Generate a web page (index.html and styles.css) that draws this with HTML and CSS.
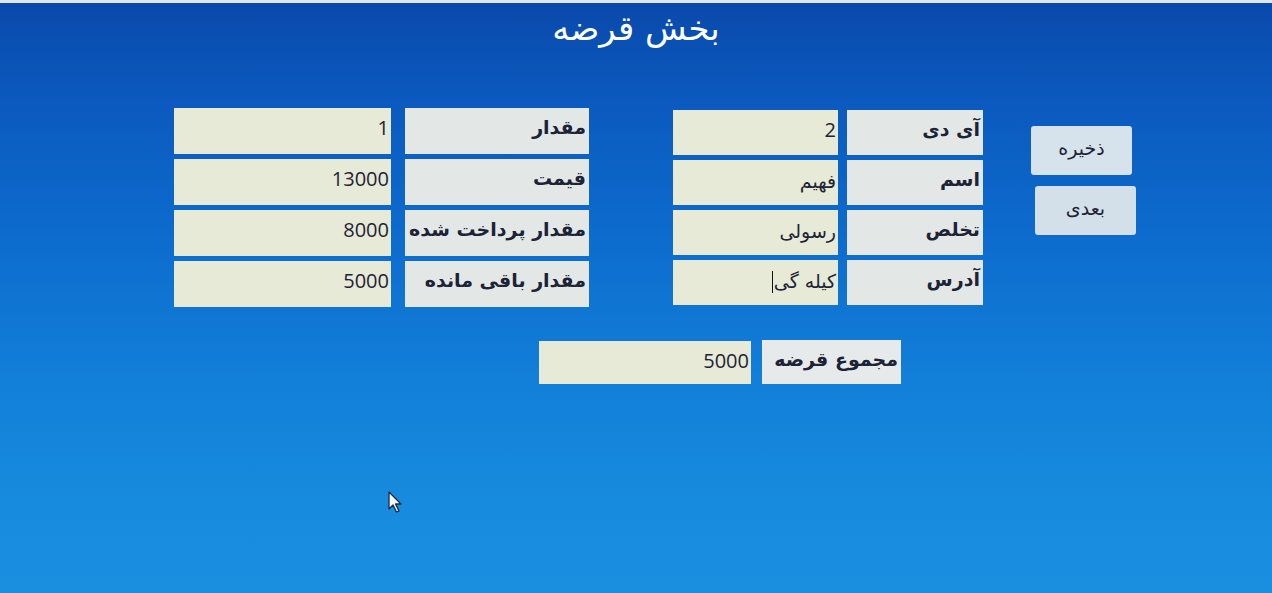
FILE: index.html
```html
<!DOCTYPE html>
<html lang="fa">
<head>
<meta charset="utf-8">
<link rel="stylesheet" href="styles.css">
</head>
<body>
<div class="screen">
  <h1 class="title" dir="rtl">بخش قرضه</h1>
  <div class="main">
    <div class="grid grid-left">
      <div class="val">1</div><div class="lbl" dir="rtl">مقدار</div>
      <div class="val">13000</div><div class="lbl" dir="rtl">قیمت</div>
      <div class="val">8000</div><div class="lbl" dir="rtl">مقدار پرداخت شده</div>
      <div class="val">5000</div><div class="lbl" dir="rtl">مقدار باقی مانده</div>
    </div>
    <div class="grid grid-right">
      <div class="val">2</div><div class="lbl" dir="rtl">آی دی</div>
      <div class="val fa" dir="rtl">فهیم</div><div class="lbl" dir="rtl">اسم</div>
      <div class="val fa" dir="rtl">رسولی</div><div class="lbl" dir="rtl">تخلص</div>
      <div class="val fa" dir="rtl">کیله گی<span class="caret"></span></div><div class="lbl" dir="rtl">آدرس</div>
    </div>
    <div class="buttons">
      <button class="btn btn-save" dir="rtl">ذخیره</button>
      <button class="btn btn-next" dir="rtl">بعدی</button>
    </div>
  </div>
  <div class="total">
    <div class="val total-val">5000</div>
    <div class="lbl total-lbl" dir="rtl">مجموع قرضه</div>
  </div>
  <svg class="cursor" width="16" height="24" viewBox="0 0 16 24">
    <path d="M1 1 L1 18 L5 14 L8.5 21 L11 20 L7.5 13 L13 13 Z" fill="#f4f6f2" stroke="#1d2a44" stroke-width="1.3" stroke-linejoin="round"/>
  </svg>
</div>
</body>
</html>
```
FILE: styles.css
```css
html, body {
  margin: 0;
  padding: 0;
}
body {
  width: 1272px;
  height: 593px;
  overflow: hidden;
  font-family: "DejaVu Sans", "Noto Sans", sans-serif;
}
.screen {
  position: relative;
  width: 1272px;
  height: 593px;
  box-sizing: border-box;
  border-top: 3px solid #dfe6ee;
  background: linear-gradient(180deg, #0a49ab 0%, #0b58bd 15%, #0d6cce 40%, #1280d9 65%, #178bde 85%, #1a8fe0 100%);
}
.title {
  margin: 0;
  padding-top: 4px;
  height: 50px;
  text-align: center;
  color: #ffffff;
  font-size: 34px;
  font-weight: normal;
  line-height: 42px;
  box-sizing: border-box;
}
.main {
  display: flex;
  align-items: flex-start;
  padding-left: 174px;
  margin-top: 55px;
}
.grid {
  display: grid;
  row-gap: 5px;
}
.grid-left {
  grid-auto-rows: 46px;
  grid-template-columns: 217px 184px;
  column-gap: 14px;
}
.grid-right {
  grid-auto-rows: 45px;
  margin-left: 84px;
  margin-top: 2px;
  grid-template-columns: 165px 136px;
  column-gap: 9px;
}
.val, .lbl {
  box-sizing: border-box;
  text-align: right;
  color: #1d2336;
  font-size: 19px;
  line-height: 24px;
}
.val {
  background: #e7ead6;
  padding: 8px 2px 0 0;
  font-family: "Open Sans", "Liberation Sans", sans-serif;
  font-size: 20px;
}
.val.fa {
  font-family: "DejaVu Sans", sans-serif;
  font-size: 19px;
  padding-top: 9px;
}
.lbl {
  background: #e3e8e7;
  padding: 7px 3px 0 0;
  font-weight: bold;
}
.caret {
  display: inline-block;
  width: 1px;
  height: 22px;
  background: #111;
  vertical-align: -5px;
  margin-right: 1px;
}
.buttons {
  display: flex;
  flex-direction: column;
  margin-left: 48px;
  margin-top: 18px;
  gap: 11px;
}
.btn {
  width: 101px;
  height: 49px;
  border: none;
  border-radius: 3px;
  background: #d7e3ec;
  color: #1d2336;
  font-family: "DejaVu Sans", sans-serif;
  font-size: 19px;
  padding: 0 0 6px 0;
}
.btn-next {
  margin-left: 4px;
  background: #d3dfe9;
}
.total {
  display: flex;
  padding-left: 539px;
  margin-top: 34px;
  gap: 11px;
}
.total-val {
  width: 212px;
  height: 43px;
}
.total-lbl {
  width: 139px;
  height: 44px;
  margin-top: -1px;
  background: #e6eaea;
}
.cursor {
  position: absolute;
  left: 388px;
  top: 488px;
}
```
